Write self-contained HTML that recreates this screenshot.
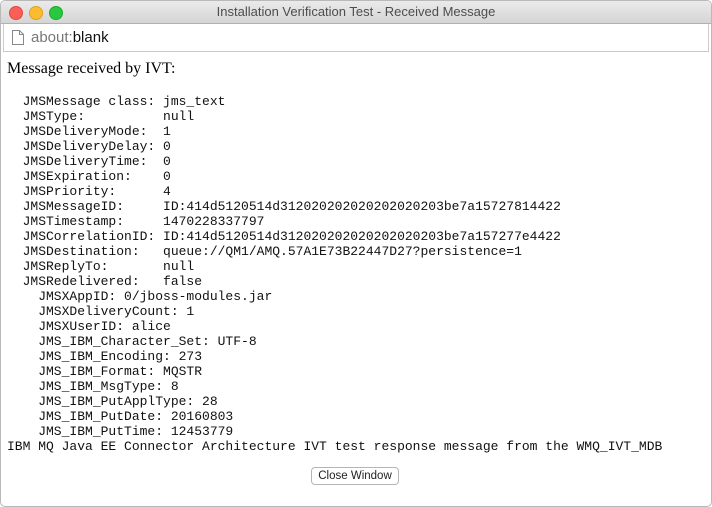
<!DOCTYPE html>
<html><head><style>
body{margin:0;width:712px;height:507px;background:#fff;overflow:hidden;position:relative;font-family:"Liberation Sans",sans-serif}
.win{position:absolute;left:0;top:0;width:710px;height:505px;border:1px solid #b9b9b9;border-radius:5px;overflow:hidden}
.tb{height:22px;background:linear-gradient(#ebebeb,#d5d5d5);border-bottom:1px solid #b1b1b1;position:relative;text-align:center;font-size:13px;line-height:22px;color:#4d4d4d}
.d{position:absolute;top:5px;width:12px;height:12px;border-radius:50%}
.url{height:27px;border-bottom:1px solid #c8c8c8;background:#fff;position:relative;margin:0 2px;border-left:1px solid #ccc;border-right:1px solid #ccc}
.url span{position:absolute;left:27px;top:5px;font-size:15px;color:#777}
.url b{font-weight:normal;color:#111}
h{position:absolute;left:7px;top:60px;font-family:"Liberation Serif",serif;font-size:16px;color:#000}
pre{position:absolute;left:7px;top:94px;margin:0;font-family:"Liberation Mono",monospace;font-size:13px;line-height:15px;color:#111}
button{position:absolute;left:311px;top:467px;width:88px;height:18px;font-size:11.5px;font-family:"Liberation Sans",sans-serif;background:#fff;border:1px solid #b5b5b5;border-radius:4px;padding:0;color:#222}
</style></head><body><div class="win">
<div class="tb"><div class="d" style="left:8px;background:#fc5f57;border:0.5px solid #de4a42"></div><div class="d" style="left:28px;background:#fdbc2e;border:0.5px solid #dea123"></div><div class="d" style="left:48px;background:#28c840;border:0.5px solid #1aab29"></div>Installation Verification Test - Received Message</div>
<div class="url"><svg style="position:absolute;left:8px;top:6px" width="12" height="15" viewBox="0 0 12 15"><path d="M0.5 0.5H7.5L11.5 4.5V14.5H0.5Z M7.5 0.5V4.5H11.5" fill="#fff" stroke="#888"/></svg><span>about:<b>blank</b></span></div>
</div>
<h>Message received by IVT:</h>
<pre>  JMSMessage class: jms_text
  JMSType:          null
  JMSDeliveryMode:  1
  JMSDeliveryDelay: 0
  JMSDeliveryTime:  0
  JMSExpiration:    0
  JMSPriority:      4
  JMSMessageID:     ID:414d5120514d312020202020202020203be7a15727814422
  JMSTimestamp:     1470228337797
  JMSCorrelationID: ID:414d5120514d312020202020202020203be7a157277e4422
  JMSDestination:   queue://QM1/AMQ.57A1E73B22447D27?persistence=1
  JMSReplyTo:       null
  JMSRedelivered:   false
    JMSXAppID: 0/jboss-modules.jar
    JMSXDeliveryCount: 1
    JMSXUserID: alice
    JMS_IBM_Character_Set: UTF-8
    JMS_IBM_Encoding: 273
    JMS_IBM_Format: MQSTR
    JMS_IBM_MsgType: 8
    JMS_IBM_PutApplType: 28
    JMS_IBM_PutDate: 20160803
    JMS_IBM_PutTime: 12453779
IBM MQ Java EE Connector Architecture IVT test response message from the WMQ_IVT_MDB</pre>
<button>Close Window</button>
</body></html>
